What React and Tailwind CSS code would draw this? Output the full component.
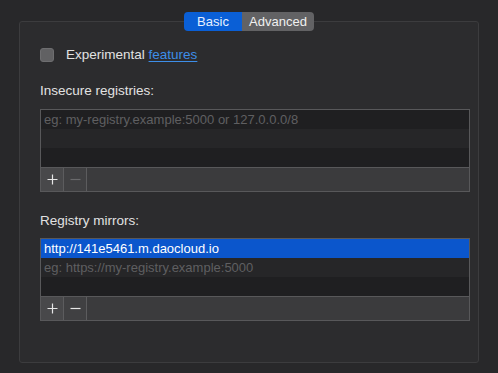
import React from 'react';

function PlusIcon({ dim }) {
  return (
    <svg width="11" height="11" viewBox="0 0 11 11">
      <path d="M5.5 0.5v10M0.5 5.5h10" stroke={dim ? '#6a6a6c' : '#e6e6e6'} strokeWidth="1.2" />
    </svg>
  );
}

function MinusIcon({ dim }) {
  return (
    <svg width="11" height="11" viewBox="0 0 11 11">
      <path d="M0.5 5.5h10" stroke={dim ? '#6a6a6c' : '#e6e6e6'} strokeWidth="1.2" />
    </svg>
  );
}

function ListBox({ rows, minusDim }) {
  return (
    <div className="w-[430px] border border-[#58585a] bg-[#1f1f21]">
      {rows.map((r, i) => (
        <div
          key={i}
          className={`h-[19px] px-[3px] flex items-center text-[13px] leading-none ${
            r.selected
              ? 'bg-[#0b56cc] text-white font-medium'
              : i % 2 === 1
              ? 'bg-[#262628] text-[#5f5f61]'
              : 'bg-[#1f1f21] text-[#5f5f61]'
          }`}
        >
          {r.text}
        </div>
      ))}
      <div className="h-[24px] flex border-t border-[#58585a] bg-[#3b3b3d]">
        <div className="w-[23px] flex items-center justify-center bg-[#48484a] border-r border-[#5c5c5e]">
          <PlusIcon />
        </div>
        <div className="w-[23px] flex items-center justify-center border-r border-[#5c5c5e] bg-[#404042]">
          <MinusIcon dim={minusDim} />
        </div>
      </div>
    </div>
  );
}

export default function App() {
  return (
    <div
      className="w-[498px] h-[373px] bg-[#28282a] pt-[21px] pl-[19px] relative"
      style={{ fontFamily: '"Liberation Sans", Arial, sans-serif' }}
    >
      {/* Tabs */}
      <div className="absolute left-[184px] top-[12px] flex h-[19px] rounded-[4px] overflow-hidden text-[13px] z-10">
        <div className="w-[58px] bg-[#0a5fd6] text-[#e8f0ff] flex items-center justify-center">Basic</div>
        <div className="w-[72px] bg-[#626264] text-[#f0f0f0] flex items-center justify-center">Advanced</div>
      </div>

      {/* Group box */}
      <div className="w-[460px] h-[342px] border border-[#3c3c3e] rounded-[3px] bg-[#2c2c2e] pl-[20px] pt-[26px]">
        <div className="flex items-center h-[14px]">
          <div className="w-[14px] h-[14px] rounded-[3px] bg-[#616163] border border-[#6e6e70]" />
          <span className="ml-[12px] text-[13.5px] text-[#e2e2e2]">
            Experimental{' '}
            <span className="text-[#3d8ee8] underline underline-offset-2">features</span>
          </span>
        </div>

        <div className="mt-[21px] h-[16px] flex items-center text-[13.5px] text-[#e2e2e2]">Insecure registries:</div>
        <div className="mt-[10px]">
          <ListBox
            minusDim
            rows={[
              { text: 'eg: my-registry.example:5000 or 127.0.0.0/8' },
              { text: '' },
              { text: '' },
            ]}
          />
        </div>

        <div className="mt-[21px] h-[16px] flex items-center text-[13.5px] text-[#e2e2e2]">Registry mirrors:</div>
        <div className="mt-[9px]">
          <ListBox
            rows={[
              { text: 'http://141e5461.m.daocloud.io', selected: true },
              { text: 'eg: https://my-registry.example:5000' },
              { text: '' },
            ]}
          />
        </div>
      </div>
    </div>
  );
}
